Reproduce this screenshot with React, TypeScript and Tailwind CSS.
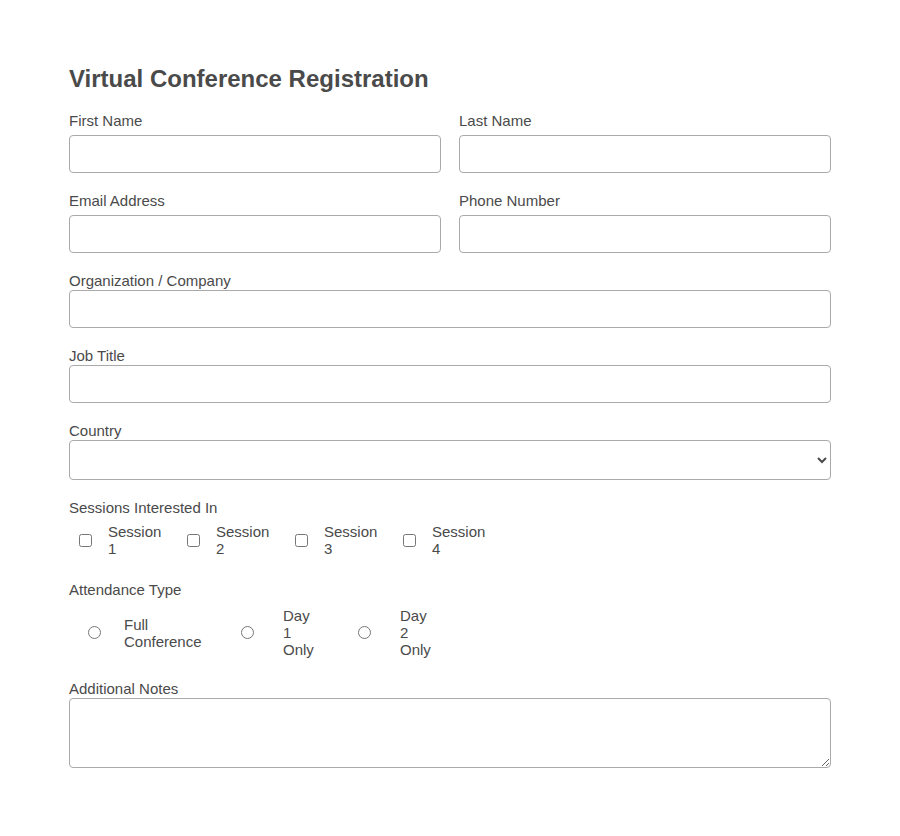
import { useState } from 'react'

// Formulaire d'inscription, rendu statique (aucune soumission).

const sessions = ['Session 1', 'Session 2', 'Session 3', 'Session 4']

const attendance = [
  { id: 'full', label: 'Full Conference', item: 'w-[153px]', gap: 'ml-[23px]', text: 'w-[82px]' },
  { id: 'day1', label: 'Day 1 Only', item: 'w-[117px]', gap: 'ml-[29px]', text: 'w-[34px]' },
  { id: 'day2', label: 'Day 2 Only', item: 'w-[117px]', gap: 'ml-[29px]', text: 'w-[34px]' },
]

const inputCls =
  'block w-full h-[38px] rounded-[4px] border border-[#aaaaaa] bg-white px-2 text-[15px] text-[#4a4a4a] outline-none'

function Field({ label, className = '', gap = 'mb-[1px]' }: { label: string; className?: string; gap?: string }) {
  return (
    <div className={className}>
      <label className={`block text-[15px] leading-[17px] ${gap}`}>{label}</label>
      <input type="text" className={inputCls} />
    </div>
  )
}

export default function App() {
  const [picked, setPicked] = useState<string[]>([])
  const [type, setType] = useState('')

  return (
    <div className="min-h-[836px] bg-white text-[#4a4a4a]" style={{ fontFamily: '"Liberation Sans", Arial, sans-serif' }}>
      <form className="mx-auto w-[762px] pt-[65px] pb-16" onSubmit={(e) => e.preventDefault()}>
        <h1 className="mb-[19px] text-[24px] font-bold leading-[28px] text-[#4a4a4a]">
          Virtual Conference Registration
        </h1>

        <div className="grid grid-cols-2 gap-x-[18px] gap-y-[19px]">
          <Field label="First Name" gap="mb-[6px]" />
          <Field label="Last Name" gap="mb-[6px]" />
          <Field label="Email Address" gap="mb-[6px]" />
          <Field label="Phone Number" gap="mb-[6px]" />
        </div>

        <Field label="Organization / Company" className="mt-[19px]" />
        <Field label="Job Title" className="mt-[19px]" />

        <div className="mt-[19px]">
          <label className="mb-[1px] block text-[15px] leading-[17px]">Country</label>
          <select className="block h-[40px] w-full rounded-[4px] border border-[#aaaaaa] bg-white px-2 text-[15px] text-[#4a4a4a]">
            <option value=""></option>
            <option>United States</option>
            <option>Canada</option>
            <option>United Kingdom</option>
          </select>
        </div>

        <div className="mt-[19px]">
          <p className="text-[15px] leading-[17px]">Sessions Interested In</p>
          <div className="mt-[7px] flex pl-[10px]">
            {sessions.map((s) => (
              <label key={s} className="flex w-[108px] items-center">
                <input
                  type="checkbox"
                  className="m-0 h-[13px] w-[13px]"
                  checked={picked.includes(s)}
                  onChange={() =>
                    setPicked((p) => (p.includes(s) ? p.filter((x) => x !== s) : [...p, s]))
                  }
                />
                <span className="ml-[16px] w-[57px] text-[15px] leading-[17px]">{s}</span>
              </label>
            ))}
          </div>
        </div>

        <div className="mt-[24px]">
          <p className="text-[15px] leading-[17px]">Attendance Type</p>
          <div className="mt-[9px] flex pl-[19px]">
            {attendance.map((a) => (
              <label key={a.id} className={`flex items-center ${a.item}`}>
                <input
                  type="radio"
                  name="attendance"
                  className="m-0 h-[13px] w-[13px]"
                  checked={type === a.id}
                  onChange={() => setType(a.id)}
                />
                <span className={`${a.gap} ${a.text} text-[15px] leading-[17px]`}>{a.label}</span>
              </label>
            ))}
          </div>
        </div>

        <div className="mt-[22px]">
          <label className="mb-[1px] block text-[15px] leading-[17px]">Additional Notes</label>
          <textarea className="block h-[70px] w-full rounded-[4px] border border-[#aaaaaa] bg-white px-2 py-1 text-[15px] text-[#4a4a4a] outline-none" />
        </div>
      </form>
    </div>
  )
}
